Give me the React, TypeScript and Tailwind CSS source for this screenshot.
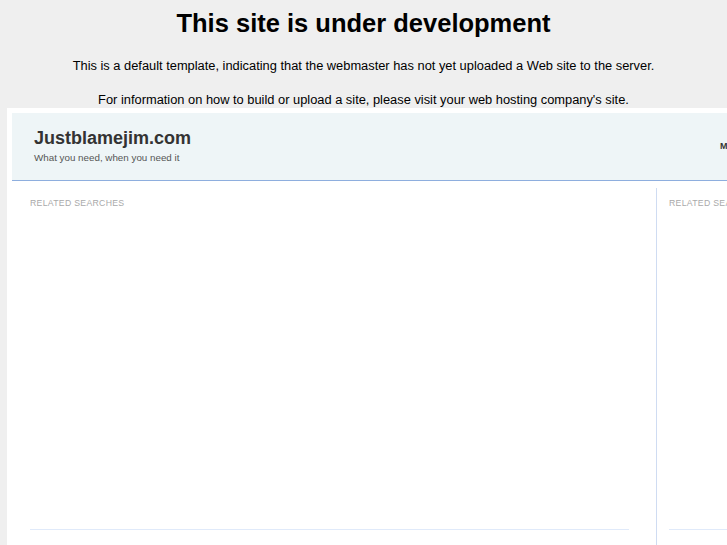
import React from 'react';

const Column: React.FC<{ width: string; pad: string; divider?: boolean }> = ({ width, pad, divider }) => (
  <div className={`${width} ${pad} ${divider ? 'border-r border-[#cfdcf2]' : ''} shrink-0 pt-[10px] h-[400px]`}>
    <div className="text-[8.7px] leading-[10px] tracking-[0.3px] uppercase text-[#a9a9a9]">Related Searches</div>
    <div className="h-[322px] border-b border-[#e0eafa]" />
  </div>
);

const App: React.FC = () => {
  return (
    <div className="w-[727px] h-[545px] overflow-hidden bg-[#efefef] font-['Liberation_Sans',Arial,sans-serif]">
      <h1 className="pt-[8px] text-center text-[25.5px] leading-[31px] font-bold text-black">
        This site is under development
      </h1>
      <p className="mt-[19px] text-center text-[12.85px] leading-[15px] text-black">
        This is a default template, indicating that the webmaster has not yet uploaded a Web site to the server.
      </p>
      <p className="mt-[19px] text-center text-[12.85px] leading-[15px] text-black">
        For information on how to build or upload a site, please visit your web hosting company's site.
      </p>

      <div className="mt-[1px] ml-[7px] w-[1000px] bg-white p-[5px]">
        <header className="h-[68px] bg-[#eef5f7] border-b border-[#8eaede] pl-[22px] flex">
          <div className="w-[686px] shrink-0 pt-[14px]">
            <div className="text-[18px] leading-[22px] font-bold text-[#333]">Justblamejim.com</div>
            <div className="mt-[3px] text-[9.8px] leading-[11px] text-[#555]">What you need, when you need it</div>
          </div>
          <nav className="pt-[28px] text-[9px] leading-[11px] font-bold text-[#333] uppercase">More</nav>
        </header>

        <div className="mt-[7px] flex">
          <Column width="w-[645px]" pad="pl-[18px] pr-[27px]" divider />
          <Column width="w-[300px]" pad="pl-[12px]" />
        </div>
      </div>
    </div>
  );
};

export default App;
